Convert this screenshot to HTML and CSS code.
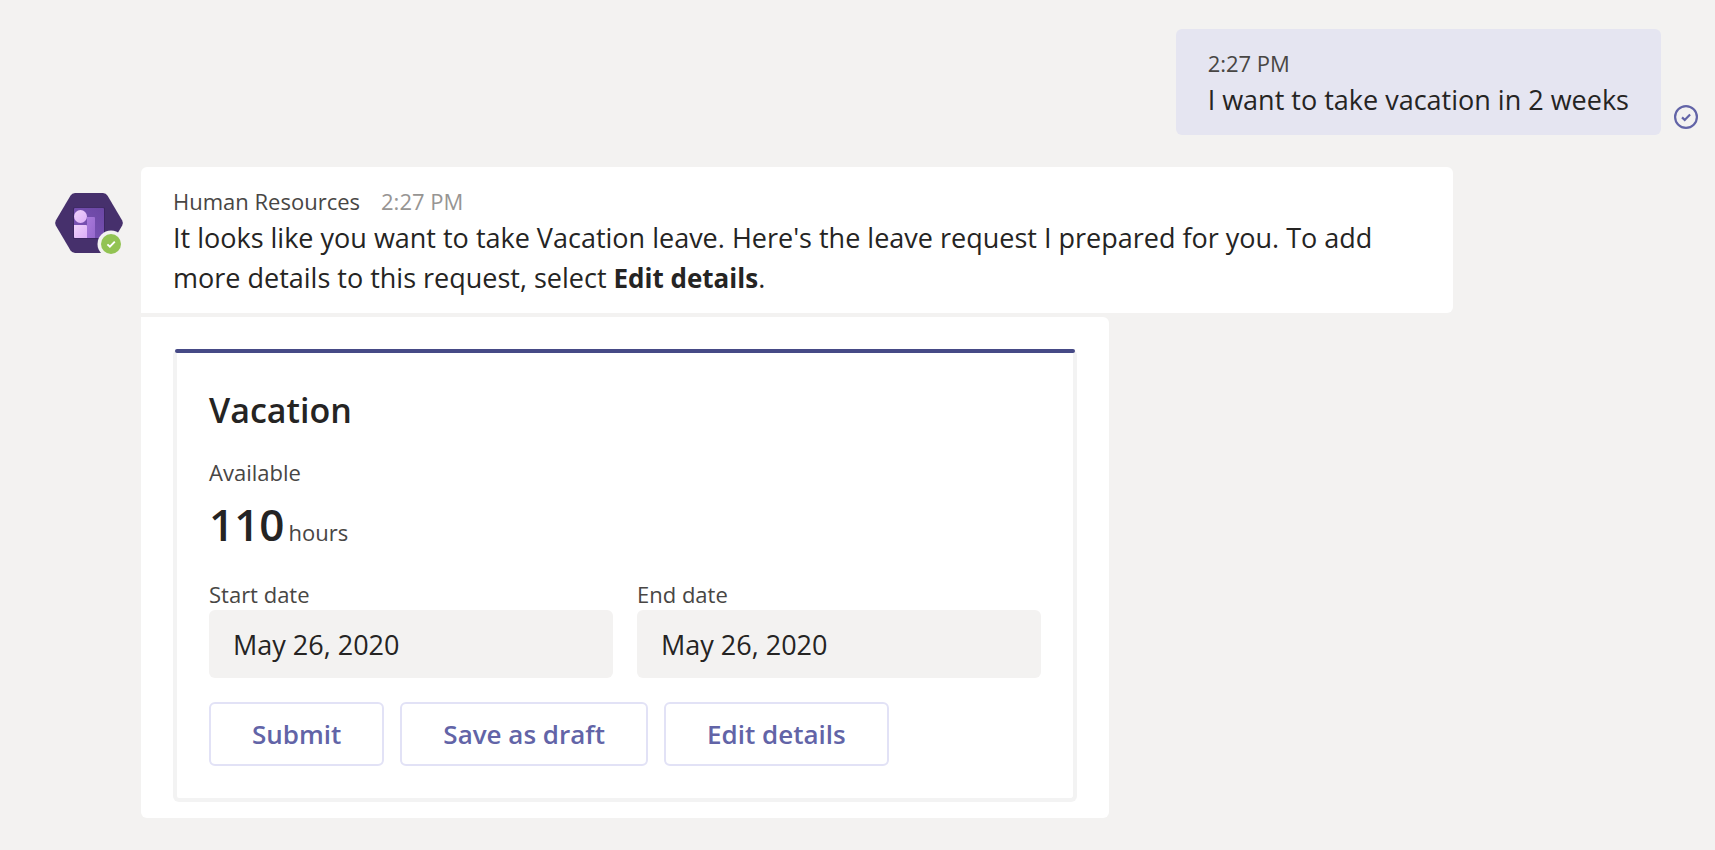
FILE: index.html
```html
<!DOCTYPE html>
<html lang="en">
<head>
<meta charset="utf-8">
<meta name="viewport" content="width=device-width, initial-scale=1">
<title>Human Resources</title>
<link rel="stylesheet" href="styles.css">
</head>
<body>
<main class="chat">
  <section class="sent">
    <div class="bubble bubble-own">
      <div class="meta"><time class="own-time">2:27 PM</time></div>
      <p class="text">I want to take vacation in 2 weeks</p>
    </div>
    <svg class="receipt" viewBox="0 0 24 24" role="img" aria-label="Sent">
      <circle cx="12" cy="12" r="10.9" fill="none" stroke="#6264a7" stroke-width="2.2"/>
      <path d="M8 12.4l2.7 2.5 5.4-5.5" fill="none" stroke="#6264a7" stroke-width="2.2"/>
    </svg>
  </section>

  <section class="received">
    <svg class="avatar" viewBox="0 0 68 62" role="img" aria-label="Human Resources, available">
      <defs>
        <linearGradient id="tile" x1="0" y1="1" x2="1" y2="0"><stop offset="0" stop-color="#7d55b8"/><stop offset="1" stop-color="#6b47a4"/></linearGradient>
        <linearGradient id="back" x1="0" y1="0" x2="1" y2="1"><stop offset="0" stop-color="#a87adb"/><stop offset="1" stop-color="#9668cc"/></linearGradient>
        <linearGradient id="front" x1="0" y1="0" x2="1" y2="1"><stop offset="0" stop-color="#efd2fb"/><stop offset="1" stop-color="#dcaef7"/></linearGradient>
      </defs>
      <path d="M20 0H48Q51 0 52.600 2.700L67.200 27.500Q68.600 30 67.200 32.500L52.600 57.300Q51 60 48 60H20Q17 60 15.400 57.300L.8 32.500Q-.6 30 .8 27.500L15.400 2.700Q17 0 20 0Z" fill="#46306c"/>
      <rect x="18" y="14.500" width="32" height="31.500" rx="1" fill="#3b2660"/>
      <rect x="19" y="15" width="30" height="30" rx="1" fill="url(#tile)"/>
      <path d="M32 24H39Q40 24 40 25V45H32Z" fill="url(#back)"/>
      <path d="M19 32H31Q32 32 32 33V45H20Q19 45 19 44Z" fill="url(#front)"/>
      <circle cx="25.500" cy="23.500" r="6.500" fill="url(#front)"/>
      <circle cx="56" cy="51" r="13.500" fill="#f3f2f1"/>
      <circle cx="56" cy="51" r="10" fill="#92c353"/>
      <path d="M52.400 51.400l2.500 2.300 4.900-5" fill="none" stroke="#fff" stroke-width="1.900"/>
    </svg>
    <div class="stack">
      <div class="bubble bubble-bot">
        <div class="meta"><span class="name">Human Resources</span><time class="time">2:27 PM</time></div>
        <p class="text">It looks like you want to take Vacation leave. Here's the leave request I prepared for you. To add more details to this request, select <strong class="strong">Edit details</strong>.</p>
      </div>
      <div class="attachment">
        <form class="card">
          <h2 class="title">Vacation</h2>
          <p class="label">Available</p>
          <p class="balance"><span class="amount">110</span><span class="unit">hours</span></p>
          <div class="dates">
            <div class="field">
              <label class="label" for="start">Start date</label>
              <input class="input" id="start" type="text" value="May 26, 2020">
            </div>
            <div class="field">
              <label class="label" for="end">End date</label>
              <input class="input" id="end" type="text" value="May 26, 2020">
            </div>
          </div>
          <div class="actions">
            <button class="button" type="button">Submit</button>
            <button class="button" type="button">Save as draft</button>
            <button class="button" type="button">Edit details</button>
          </div>
        </form>
      </div>
    </div>
  </section>
</main>
</body>
</html>
```
FILE: styles.css
```css
* {
  box-sizing: border-box;
}

body {
  margin: 0;
  background: #f3f2f1;
  color: #252423;
  font-family: "Segoe UI", "Open Sans", "Noto Sans", sans-serif;
  font-size: 27px;
  line-height: 40px;
}

p,
h2 {
  margin: 0;
}

.chat {
  display: flex;
  flex-direction: column;
  gap: 32px;
  padding: 29px 17px 32px 55px;
}

.sent {
  display: flex;
  justify-content: flex-end;
  align-items: flex-end;
  gap: 13px;
}

.bubble {
  padding: 18px 32px 15px;
  border-radius: 6px;
}

.bubble-own {
  background: #e5e5f1;
}

.receipt {
  width: 24px;
  height: 24px;
  flex: none;
  margin-bottom: 6px;
  overflow: visible;
}

.meta {
  display: flex;
  gap: 21px;
  font-size: 22px;
  line-height: 33px;
}

.own-time,
.name,
.label,
.unit {
  color: #484644;
}

.time {
  color: #979593;
}

.strong {
  font-size: 26px;
  font-weight: 700;
}

.received {
  display: flex;
  align-items: flex-start;
  gap: 18px;
}

.avatar {
  width: 68px;
  height: 62px;
  flex: none;
  margin-top: 26px;
  overflow: visible;
}

.stack {
  flex: 1;
  min-width: 0;
  display: flex;
  flex-direction: column;
  gap: 4px;
}

.bubble-bot {
  max-width: 1312px;
  background: #fff;
  border-bottom-left-radius: 0;
}

.attachment {
  max-width: 968px;
  padding: 32px 32px 16px;
  background: #fff;
  border-radius: 0 6px 6px 6px;
}

.card {
  position: relative;
  padding: 36px 32px 32px;
  border: 4px solid #f3f3f3;
  border-top: 0;
  border-radius: 6px;
}

.card::before {
  content: "";
  position: absolute;
  top: 0;
  left: -2px;
  right: -2px;
  height: 4px;
  border-radius: 2px;
  background: #464a86;
}

.title {
  margin-bottom: 21px;
  font-size: 34px;
  font-weight: 600;
  line-height: 50px;
}

.label {
  display: block;
  font-size: 22px;
  line-height: 32px;
}

.balance {
  display: flex;
  align-items: baseline;
  gap: 4px;
  margin: 4px 0 22px;
  line-height: 64px;
}

.amount {
  font-size: 44px;
  font-weight: 600;
}

.unit {
  font-size: 22px;
  line-height: 32px;
}

.dates {
  display: grid;
  grid-template-columns: 1fr 1fr;
  gap: 24px;
  margin-bottom: 24px;
}

.input {
  display: block;
  width: 100%;
  height: 68px;
  padding: 0 24px;
  border: 0;
  border-radius: 6px;
  background: #f3f2f1;
  color: inherit;
  font: inherit;
}

.actions {
  display: flex;
  flex-wrap: wrap;
  gap: 16px;
}

.button {
  height: 64px;
  padding: 0 41px;
  border: 2px solid #e2e2f6;
  border-radius: 6px;
  background: #fff;
  color: #6264a7;
  font: inherit;
  font-size: 26px;
  font-weight: 600;
}
```
